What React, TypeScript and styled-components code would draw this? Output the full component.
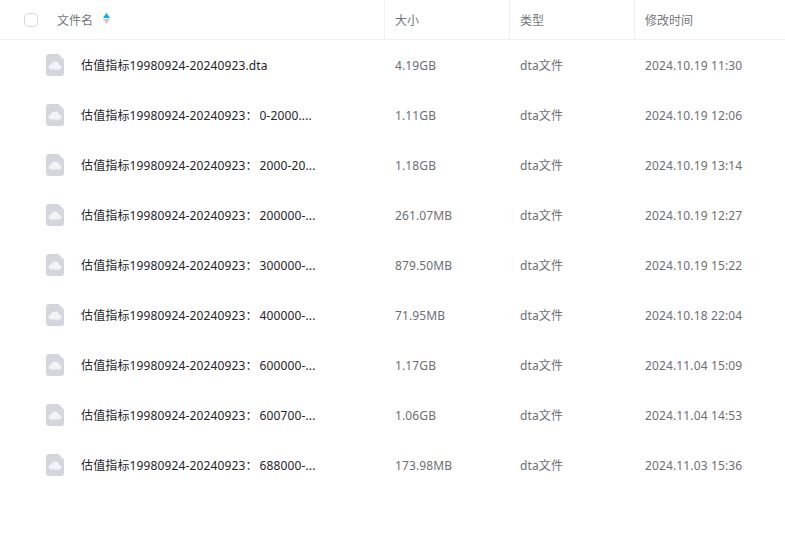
import React from "react";
import styled, { createGlobalStyle } from "styled-components";

const GlobalStyle = createGlobalStyle`
  html, body {
    margin: 0;
    background: #fff;
    overflow: hidden;
  }
  body {
    font-family: "Noto Sans", "Noto Sans CJK SC", sans-serif;
    font-size: 12px;
    letter-spacing: 0.13px;
  }
`;

const Table = styled.div`
  width: 785px;
  height: 540px;
  background: #fff;
`;

const HeaderRow = styled.div`
  display: grid;
  grid-template-columns: 384px 125px 125px 151px;
  height: 39px;
  border-bottom: 1px solid #f0f1f3;
`;

const HeaderCell = styled.div<{ $divider?: boolean }>`
  display: flex;
  align-items: center;
  padding-left: ${(p) => (p.$divider ? "10px" : "0")};
  border-left: ${(p) => (p.$divider ? "1px solid #f0f1f3" : "none")};
  color: #75777c;
  letter-spacing: 0;
`;

const Checkbox = styled.span`
  width: 12px;
  height: 12px;
  margin-left: 24px;
  margin-right: 19px;
  border: 1px solid #d9dbe0;
  border-radius: 4px;
`;

const SortIcon = styled.svg`
  width: 7px;
  height: 11px;
  margin-left: 10px;
  margin-top: -2px;
`;

const Row = styled.div`
  display: grid;
  grid-template-columns: 384px 125px 125px 151px;
  height: 50px;
  align-items: center;
`;

const NameCell = styled.div`
  display: flex;
  align-items: center;
  padding-left: 46px;
  color: #25262b;
`;

const FileName = styled.span`
  margin-left: 17px;
  white-space: nowrap;
`;

const Colon = styled.span`
  padding-right: 2px;
`;

const Cell = styled.div`
  padding-left: 11px;
  color: #6d6f75;
  white-space: nowrap;
`;

const rows = [
  ["估值指标19980924-20240923.dta", "4.19GB", "2024.10.19 11:30"],
  ["估值指标19980924-20240923：0-2000....", "1.11GB", "2024.10.19 12:06"],
  ["估值指标19980924-20240923：2000-20...", "1.18GB", "2024.10.19 13:14"],
  ["估值指标19980924-20240923：200000-...", "261.07MB", "2024.10.19 12:27"],
  ["估值指标19980924-20240923：300000-...", "879.50MB", "2024.10.19 15:22"],
  ["估值指标19980924-20240923：400000-...", "71.95MB", "2024.10.18 22:04"],
  ["估值指标19980924-20240923：600000-...", "1.17GB", "2024.11.04 15:09"],
  ["估值指标19980924-20240923：600700-...", "1.06GB", "2024.11.04 14:53"],
  ["估值指标19980924-20240923：688000-...", "173.98MB", "2024.11.03 15:36"],
];

const FileIcon = () => (
  <svg width="18" height="22" viewBox="0 0 18 22">
    <path d="M3 0h9.5L18 5.5V19a3 3 0 0 1-3 3H3a3 3 0 0 1-3-3V3a3 3 0 0 1 3-3z" fill="#d3d6dc" />
    <path
      d="M5.4 15.5a2.5 2.5 0 0 1-.4-5 4.2 4.2 0 0 1 8.1.2 2.4 2.4 0 0 1-.2 4.8z"
      fill="#f2f3f5"
    />
  </svg>
);

const App = () => (
  <Table>
    <GlobalStyle />
    <HeaderRow>
      <HeaderCell>
        <Checkbox />
        文件名
        <SortIcon viewBox="0 0 7 11">
          <path d="M3.5 0l3.5 5H0z" fill="#06a7ff" />
          <path d="M3.5 11L0 6h7z" fill="#c8ccd4" />
        </SortIcon>
      </HeaderCell>
      <HeaderCell $divider>大小</HeaderCell>
      <HeaderCell $divider>类型</HeaderCell>
      <HeaderCell $divider>修改时间</HeaderCell>
    </HeaderRow>
    {rows.map(([name, size, time]) => {
      const [stem, rest] = name.split("：");
      return (
        <Row key={time}>
          <NameCell>
            <FileIcon />
            <FileName>
              {stem}
              {rest && <Colon>：</Colon>}
              {rest}
            </FileName>
          </NameCell>
          <Cell>{size}</Cell>
          <Cell>dta文件</Cell>
          <Cell>{time}</Cell>
        </Row>
      );
    })}
  </Table>
);

export default App;
